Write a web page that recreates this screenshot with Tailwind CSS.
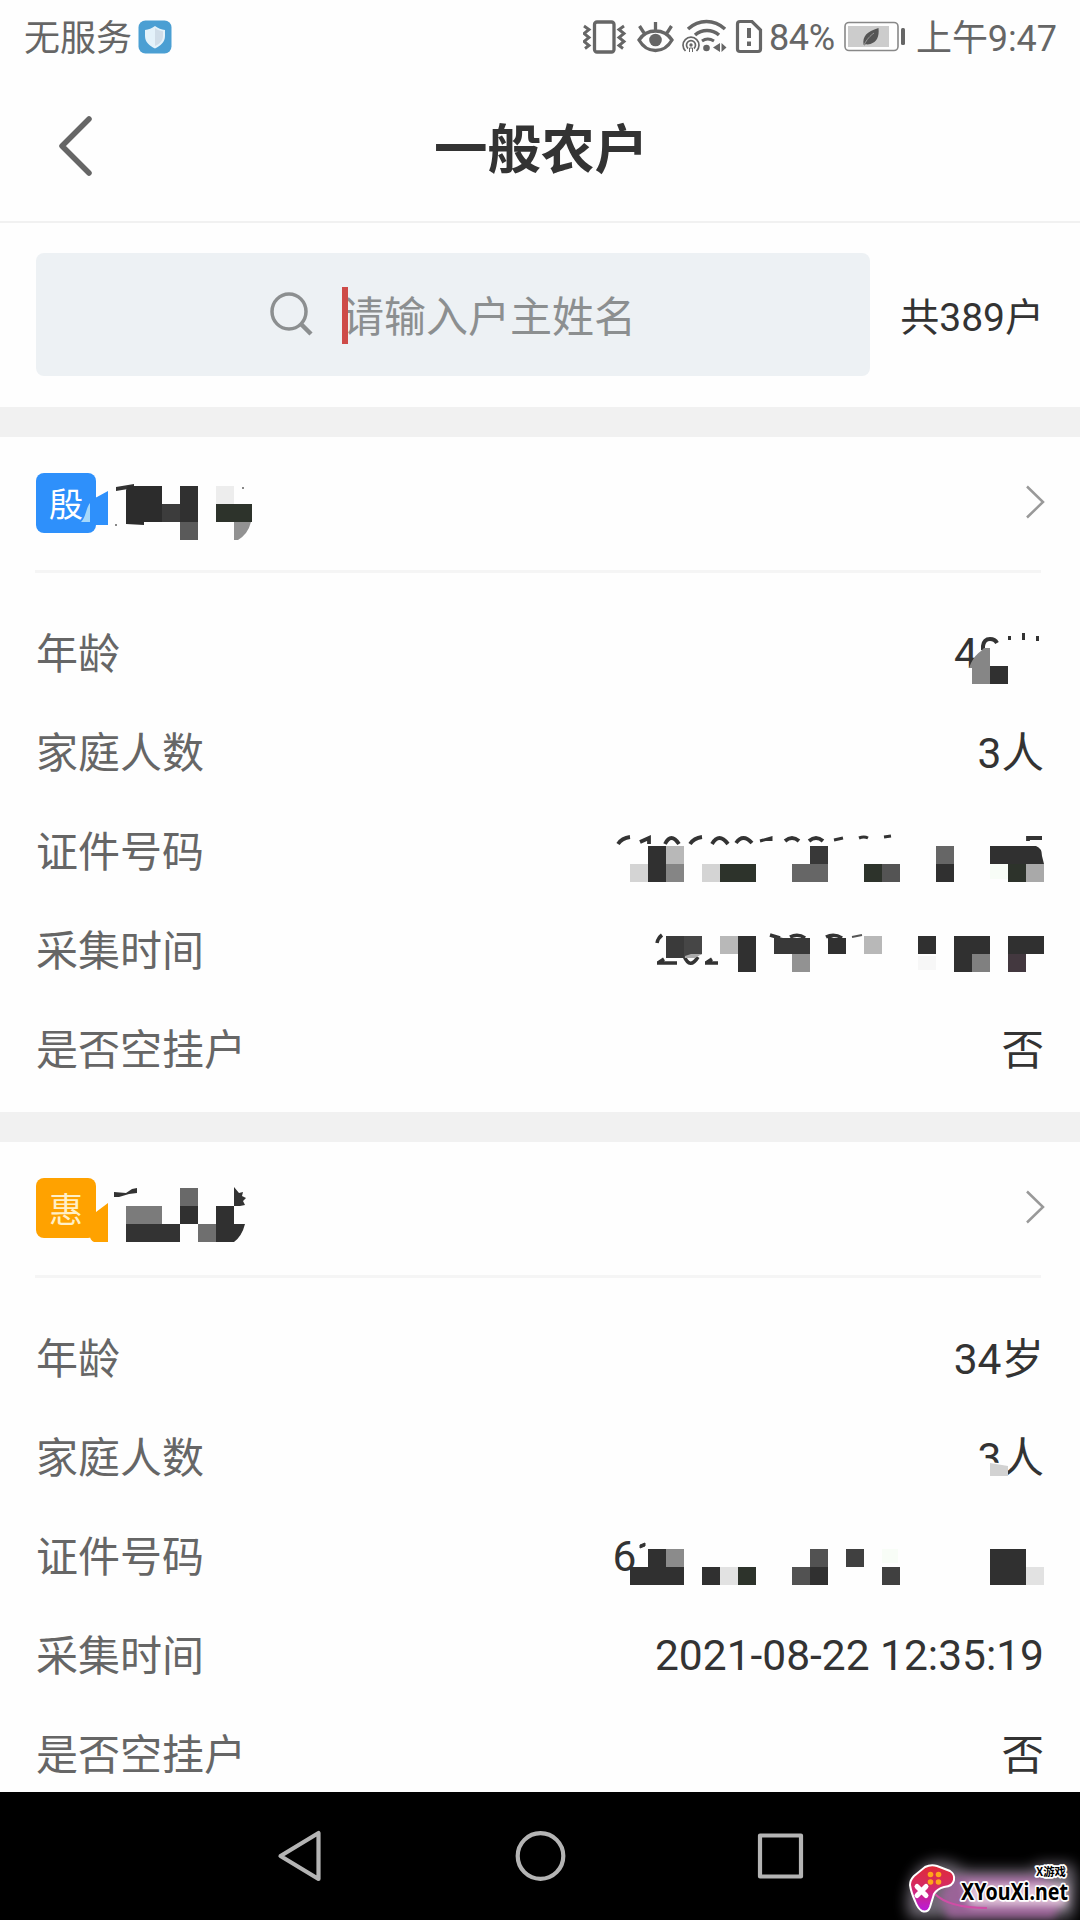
<!DOCTYPE html>
<html lang="zh-CN">
<head>
<meta charset="utf-8">
<title>一般农户</title>
<script src="https://cdn.jsdelivr.net/npm/@tailwindcss/browser@4"></script>
</head>
<body class="bg-white">
<div class="w-[1080px] h-[1920px] flex flex-col overflow-hidden bg-[#fefefe] font-[Roboto,'Noto_Sans_CJK_SC',sans-serif] text-[#333]">

  <!-- status bar -->
  <header class="h-[74px] shrink-0 flex items-center justify-between pl-[24px] pr-[23px] text-[#666] text-[36px] leading-none">
    <div class="flex items-center gap-[6px]">
      <span class="pt-[3px]">无服务</span>
      <svg class="w-[34px] h-[34px]" viewBox="0 0 34 34"><rect x=".5" y=".5" width="33" height="33" rx="7" fill="#4b9fd3"/><path d="M17 6c3 2.500 6.500 3.500 10 4v6c0 6-4.500 10-10 12.500C11.500 26 7 22 7 16v-6c3.500-.5 7-1.500 10-4z" fill="#e4f2fa"/><path d="M17 8c2.500 2 5 2.800 8 3.200V16c0 5-4 8.500-8 10z" fill="#d0dde8"/></svg>
    </div>
    <svg class="w-[474px] h-[44px]" viewBox="583 15 474 44" fill="none" stroke="#666">
      <rect x="594.500" y="22" width="19.500" height="30" rx="2.500" stroke-width="3.300"/>
      <path d="M584 26l5 3.500-5 4 5 4-5 4 5 4-4 3M624 26l-5 3.500 5 4-5 4 5 4-5 4 4 3" stroke-width="2.900"/>
      <path d="M639 40c8-12 25-12 33 0-8 14-25 14-33 0zM655.500 30v-8M644 33l-4.500-7M667 33l4.500-7" stroke-width="3.300"/><circle cx="655.500" cy="40" r="6.300" fill="#666" stroke="none"/>
      <path d="M688 29c11-10 26-10 37 0M695 35c7-6 17-6 24 0" stroke-width="3.600"/><path d="M702 41c3.500-2.500 8-2.500 12 0" stroke-width="3"/>
      <path d="M685.500 51a8 8 0 1 1 11 0M688 48.500a4.500 4.500 0 1 1 6 0" stroke-width="1.700"/><circle cx="691" cy="45" r="1.700" fill="#666" stroke="none"/><path d="M689.500 52v-4h3v4" stroke-width="1"/>
      <circle cx="706.500" cy="48" r="3.300" fill="#666" stroke="none"/><path d="M720 43v9l-7-4.500zM721.500 43v9l5-4.500z" fill="#666" stroke="none"/>
      <path d="M740 21.500h12l8.500 8.500v19a2.500 2.500 0 0 1-2.500 2.500h-18a2.500 2.500 0 0 1-2.500-2.500V24a2.500 2.500 0 0 1 2.500-2.500z" stroke-width="3.200"/><path d="M749 28v10M749 41.500v4.500" stroke-width="4"/>
      <text x="769" y="50" font-size="36" fill="#666" stroke="none" textLength="66">84%</text>
      <rect x="845" y="22.500" width="53" height="28" rx="4" stroke="#888" stroke-width="1.600"/><rect x="848" y="26" width="41" height="21" fill="#ccc" stroke="none"/>
      <path d="M878.500 28c1 9-2 14-8 16-3 .8-4 .2-5 .2l-1 1.300-1-1c-1-8 3-13 15-16.500z" fill="#555" stroke="none"/><path d="M864 45c3-6 6-9 10-12" stroke="#999" stroke-width="1"/><rect x="901" y="28" width="4" height="17" rx="1.500" fill="#666" stroke="none"/>
      <text x="916" y="50.500" font-size="36" fill="#666" stroke="none" textLength="141">上午9:47</text>
    </svg>
  </header>

  <!-- title bar -->
  <nav class="h-[149px] shrink-0 grid grid-cols-3 items-center px-[57px] border-b-2 border-[#f1f1f1]">
    <svg class="w-[36px] h-[66px] mb-[3px]" viewBox="0 0 36 66" fill="none" stroke="#666" stroke-width="5.500" stroke-linecap="round" stroke-linejoin="round"><path d="M32 6L5 33l27 27"/></svg>
    <h1 class="pt-[7px] pl-[2px] text-[53.500px] leading-none font-bold text-center whitespace-nowrap">一般农户</h1>
  </nav>

  <!-- search -->
  <section class="h-[184px] shrink-0 flex items-center justify-between pb-[2px] px-[36px]">
    <div class="w-[834px] h-[123px] rounded-lg bg-[#edf1f4] flex items-center pl-[233px]">
      <svg class="w-[44px] h-[46px] shrink-0" viewBox="0 0 44 46" fill="none" stroke="#8c8f90" stroke-width="3.500"><ellipse cx="20" cy="20.500" rx="17" ry="17.500"/><path d="M32 33l10 10" stroke-width="4.500"/></svg>
      <i class="block w-[6px] h-[57px] bg-[#ce4b48] ml-[29px] -mr-[6px] mt-[2px] relative z-10"></i>
      <span class="pt-[8px] text-[42px] leading-none text-[#8c8f90] whitespace-nowrap">请输入户主姓名</span>
    </div>
    <span class="pt-[8px] text-[39px] leading-none whitespace-nowrap">共389户</span>
  </section>

  <main class="h-[1385px] shrink-0 overflow-hidden">
    <!-- household 1 -->
    <article class="h-[705px] border-t-[30px] border-[#f1f1f1]">
      <div class="h-[136px] ml-[35px] mr-[39px] pl-[1px] flex items-center justify-between border-b-3 border-[#f5f5f5]">
        <svg class="w-[224px] h-[78px] mb-[2px]" viewBox="36 464 224 78">
          <rect x="36" y="473" width="60" height="60" rx="8" fill="#2e90fb"/><path d="M90 525V500l7-3 11-6v34z" fill="#2e90fb"/>
          <text x="49" y="517" font-size="34" fill="#fff">殷</text><path d="M90 503v19h-9c5-5 5-14 9-19z" fill="#a5d8fb"/>
          <path d="M116 487l18-3v4l-18 3z" fill="#333"/><path d="M126 490l2-4h34v36h-18v3l-18-1z" fill="#2c2c2c"/><path d="M162 504h18v18h-18z" fill="#3c3c3c"/><path d="M180 486h18v36h-18z" fill="#303030"/><path d="M180 522h18v18h-18z" fill="#5a5a5a"/>
          <path d="M216 486h18v18h-18z" fill="#ededed"/><path d="M216 504h36v18h-36z" fill="#2d332b"/><path d="M234 522h17q-3 12-13 18h-4z" fill="#929292"/><path d="M115 524h2v2h-2zM242 487h2v2h-2z" fill="#888"/>
        </svg>
        <svg class="w-[20px] h-[36px] -mr-[4px] mb-[3px]" viewBox="0 0 20 36" fill="none" stroke="#999" stroke-width="2.500"><path d="M2 2.500L18 18 2 33.500"/></svg>
      </div>
      <dl class="pt-[31px] px-[36px] text-[42.500px] leading-none">
        <div class="h-[99px] flex items-center justify-between"><dt class="pt-[2px] text-[#666] text-[42px]">年龄</dt><dd><svg class="w-[94px] h-[60px]" viewBox="950 624 94 60"><text x="954" y="668" font-size="42.500" fill="#333">4</text><path d="M983 650v-4q1-7 7-7 5 0 7 4" fill="none" stroke="#333" stroke-width="4"/><path d="M971 663q4-8 10-12l3-3h6v36h-18v-16h-3z" fill="#868686"/><path d="M990 666h18v18h-18z" fill="#303030"/><path d="M1008 636h3v4h-3zM1022 633h3v7h-3zM1036 636h3v5h-3z" fill="#333"/></svg></dd></div>
        <div class="h-[99px] flex items-center justify-between"><dt class="pt-[2px] text-[#666] text-[42px]">家庭人数</dt><dd class="pt-[3px]">3人</dd></div>
        <div class="h-[99px] flex items-center justify-between"><dt class="pt-[2px] text-[#666] text-[42px]">证件号码</dt><dd><svg class="w-[464px] h-[60px]" viewBox="580 822 464 60">
          <g fill="none" stroke="#333" stroke-width="3.800"><path d="M618 844q4-6 12-7M640 842l9-4v6M665 844q6-12 14 0M690 844q4-6 12-7M712 844q7-12 16 0M736 843q7-10 16 0M785 841q7-6 14 0M809 841q7-6 14 0M1028 841v-3h14"/><path d="M760 841l11-3v3M834 840l9-2M859 838q5-2 9 0M884 837l7-1" stroke-width="3"/></g>
          <path d="M630 864h18v18h-18zM702 864h18v18h-18z" fill="#d4d4d4"/><path d="M648 846h18v36h-18zM936 864h18v18h-18z" fill="#303030"/><path d="M666 846h18v18h-18z" fill="#b8b8b8"/><path d="M666 864h18v18h-18z" fill="#858585"/><path d="M720 864h36v18h-36zM864 864h18v18h-18zM1008 864h18v18h-18z" fill="#2d332b"/><path d="M792 864h36v18h-36zM936 846h18v18h-18z" fill="#666"/><path d="M810 846h18v18h-18z" fill="#383838"/><path d="M882 864h18v18h-18z" fill="#545454"/><path d="M990 846h46q6 2 6 10l2 8h-54z" fill="#303030"/><path d="M1026 864h18v18h-18z" fill="#a9a9a9"/><path d="M990 864h18v15h-18z" fill="#f8fdf7"/></svg></dd></div>
        <div class="h-[99px] flex items-center justify-between"><dt class="pt-[2px] text-[#666] text-[42px]">采集时间</dt><dd><svg class="w-[464px] h-[60px]" viewBox="580 921 464 60">
          <path d="M657 943q1-5 5-8M658 963l6-4M657 963h20M684 956q6 14 14 1M706 963l6-4M705 963h13M770 935l10 3M790 937q8-4 15 1M826 937q8-4 16 1" fill="none" stroke="#333" stroke-width="3.500"/><path d="M852 937l10-2" stroke="#555" stroke-width="2"/>
          <path d="M666 936h18v22h-18z" fill="#3a3a3a"/><path d="M684 936h18v18l-12 4h-6z" fill="#464646"/><path d="M685 956l6-2h11l-7 4h-10z" fill="#aaa"/><path d="M720 936h18v18h-18zM864 936h18v18h-18z" fill="#b8b8b8"/><path d="M738 936h18v36h-18zM828 936l6 2h12v16h-18zM918 936h18v18h-18zM954 936h36v18h-18v18h-18zM1008 936h36v18h-36z" fill="#303030"/><path d="M774 936l9 2h20l7 0v16h-36z" fill="#383838"/><path d="M792 954h18v18h-18z" fill="#929292"/><path d="M972 954h18v18h-18z" fill="#808080"/><path d="M1008 954h18v18h-18z" fill="#43383f"/><path d="M918 956h18v14h-18z" fill="#f7f7f7"/></svg></dd></div>
        <div class="h-[99px] flex items-center justify-between"><dt class="pt-[2px] text-[#666] text-[42px]">是否空挂户</dt><dd class="pt-[3px]">否</dd></div>
      </dl>
    </article>

    <!-- household 2 -->
    <article class="h-[705px] border-t-[30px] border-[#f1f1f1]">
      <div class="h-[136px] ml-[35px] mr-[39px] pl-[1px] flex items-center justify-between border-b-3 border-[#f5f5f5]">
        <svg class="w-[224px] h-[78px] mb-[2px]" viewBox="36 1169 224 78">
          <rect x="36" y="1178" width="60" height="60" rx="8" fill="#ffa200"/><path d="M90 1236v-24h6l12-9v39H94q-4-2-4-6z" fill="#ffa200"/>
          <text x="49" y="1222" font-size="34" fill="#fff0c8">惠</text>
          <path d="M114 1192l12 1 6-4 5-1v5l-8 1-10 3-5 0z" fill="#333"/><path d="M126 1206h36v18h-36z" fill="#7b7b7b"/><path d="M126 1224h54v18h-54z" fill="#333"/><path d="M180 1188h18v18h-18z" fill="#696969"/><path d="M180 1206h18v18h-18zM216 1206h18v18h11q-3 12-11 18h-18z" fill="#303030"/><path d="M198 1224h18v18h-18z" fill="#6f6f6f"/><path d="M234 1187l5 6 4-1-1 4 4 2-3 3 2 4-5 1h-6v-9z" fill="#333"/>
        </svg>
        <svg class="w-[20px] h-[36px] -mr-[4px] mb-[3px]" viewBox="0 0 20 36" fill="none" stroke="#999" stroke-width="2.500"><path d="M2 2.500L18 18 2 33.500"/></svg>
      </div>
      <dl class="pt-[31px] px-[36px] text-[42.500px] leading-none">
        <div class="h-[99px] flex items-center justify-between"><dt class="pt-[2px] text-[#666] text-[42px]">年龄</dt><dd class="pt-[3px]">34岁</dd></div>
        <div class="h-[99px] flex items-center justify-between"><dt class="pt-[2px] text-[#666] text-[42px]">家庭人数</dt><dd class="relative pt-[3px]">3人<svg class="absolute left-0 top-[24px] w-[30px] h-[24px]" viewBox="0 0 30 24"><path d="M0 2l12 1 16 2v19H0z" fill="#fefefe"/><path d="M12 4l18 3v10H12z" fill="#d2d2d2"/></svg></dd></div>
        <div class="h-[99px] flex items-center justify-between"><dt class="pt-[2px] text-[#666] text-[42px]">证件号码</dt><dd><svg class="w-[464px] h-[60px]" viewBox="580 1527 464 60">
          <text x="612.500" y="1571" font-size="42.500" fill="#333">6</text><path d="M640 1545l5-2v3l-5 2z" fill="#333" stroke="#333"/>
          <path d="M630 1567h18v-18h18v18h18v18h-54zM702 1567h18v18h-18zM810 1567h18v18h-18zM990 1549h36v36h-36z" fill="#303030"/><path d="M666 1549h18v18h-18z" fill="#8b8b8b"/><path d="M720 1567h18v18h-18zM1026 1567h18v18h-18z" fill="#e2e2e2"/><path d="M738 1567h18v18h-18z" fill="#2d332b"/><path d="M792 1567h18v18h-18zM810 1549h18v18h-18z" fill="#525252"/><path d="M846 1549h18v18h-18zM882 1567h18v18h-18z" fill="#404040"/><path d="M882 1549h16v14h-16z" fill="#f8fdf7"/></svg></dd></div>
        <div class="h-[99px] flex items-center justify-between"><dt class="pt-[2px] text-[#666] text-[42px]">采集时间</dt><dd class="pt-[2px]">2021-08-22 12:35:19</dd></div>
        <div class="h-[99px] flex items-center justify-between"><dt class="pt-[2px] text-[#666] text-[42px]">是否空挂户</dt><dd class="pt-[3px]">否</dd></div>
      </dl>
    </article>
  </main>

  <!-- system navigation -->
  <footer class="h-[128px] shrink-0 bg-black">
    <svg class="w-[1080px] h-[128px]" viewBox="0 1792 1080 128" fill="none">
      <defs>
        <filter id="glow" x="-40%" y="-60%" width="180%" height="220%"><feGaussianBlur stdDeviation="7"/></filter>
        <filter id="soft" x="-40%" y="-60%" width="180%" height="220%"><feGaussianBlur stdDeviation="4"/></filter>
        <linearGradient id="pad" x1="0" y1="0" x2="0" y2="1"><stop offset="0" stop-color="#e02a35"/><stop offset=".45" stop-color="#d52a62"/><stop offset="1" stop-color="#b91be0"/></linearGradient>
      </defs>
      <g stroke="#b4b4b4" stroke-width="4.200" stroke-linejoin="round">
        <path d="M280.500 1856l38-23v46z"/><ellipse cx="540.500" cy="1856" rx="22.800" ry="22.800"/><rect x="760" y="1835.500" width="41" height="41"/>
      </g>
      <path d="M916 1872q14-16 38-8l12 6h64l10-6h32q8 20 0 54H910q-8-20 6-46z" fill="#a9a0b0" opacity=".65" filter="url(#glow)"/>
      <path d="M952 1876h90l22 20-10 22H948l-8-22z" fill="#a3649f" opacity=".85" filter="url(#soft)"/><path d="M965 1884h102v22H970z" fill="#f3dcea" opacity=".8" filter="url(#soft)"/>
      <path d="M972 1866h24M1004 1866h22" stroke="#8a4a24" stroke-width="7" filter="url(#soft)"/><path d="M958 1914h90" stroke="#b03492" stroke-width="5" filter="url(#soft)"/>
      <path d="M935 1894q14 14 52 14" stroke="#d04da6" stroke-width="2"/>
      <path d="M925 1867q6-3 12-1l13 5q5 3 4 9-1 6-10 7-7 2-10 7l-4 13q-2 6-8 4-4-2-7-10-4-9-5-16 0-5 4-9z" fill="url(#pad)" stroke="#fff" stroke-width="2"/>
      <g fill="#ffa51a"><circle cx="930.500" cy="1874.500" r="2.800"/><circle cx="938.500" cy="1874.500" r="2.800"/><circle cx="930.500" cy="1882" r="2.800"/><circle cx="938.500" cy="1882" r="2.800"/></g>
      <path d="M917 1886.500l9 9M926 1886.500l-9 9" stroke="#fff" stroke-width="5" stroke-linecap="round"/>
      <g font-weight="700" fill="#000" stroke="#fff" stroke-width="3.500" stroke-linejoin="round" paint-order="stroke">
        <text x="961" y="1900" font-size="24" font-family="Noto Sans,sans-serif" textLength="107" lengthAdjust="spacingAndGlyphs">XYouXi.net</text>
        <text x="1036" y="1876" font-size="11.500" font-family="Noto Sans CJK SC,sans-serif" textLength="30" lengthAdjust="spacingAndGlyphs">X游戏</text>
      </g>
    </svg>
  </footer>
</div>
</body>
</html>
